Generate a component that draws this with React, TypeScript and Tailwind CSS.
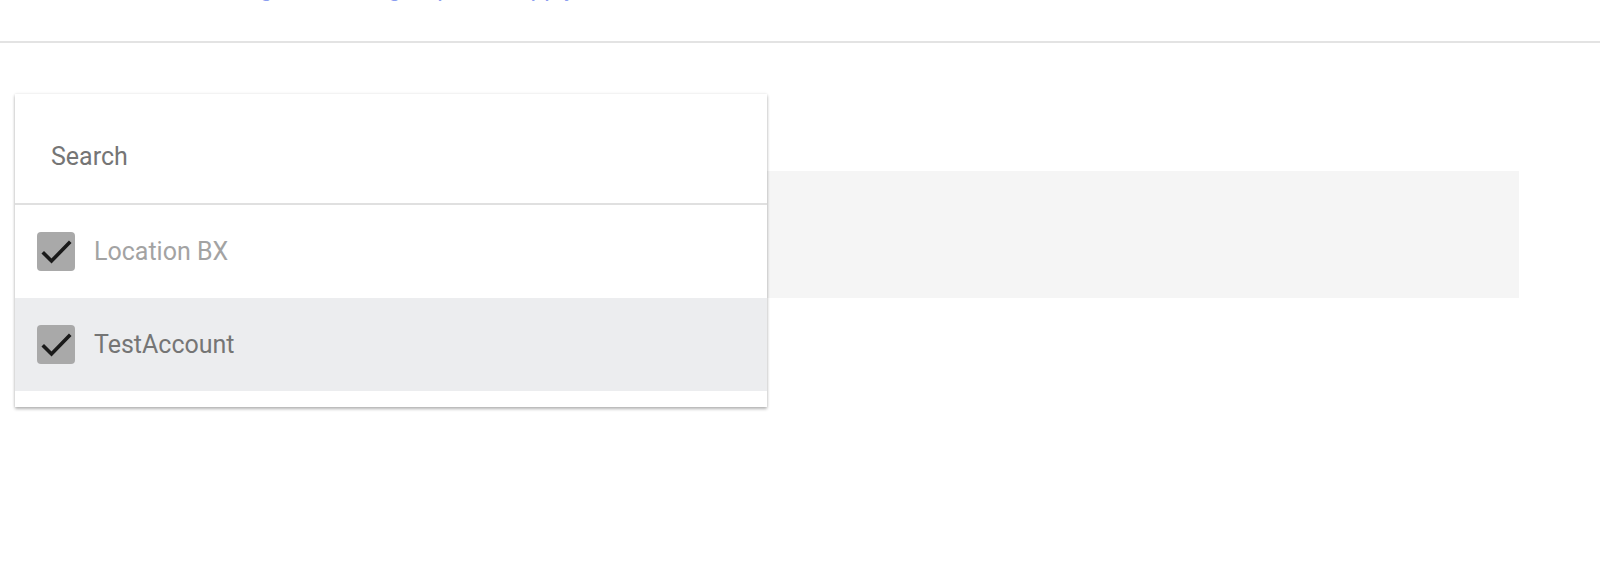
import React from 'react';

const options = [
  { label: 'Location BX', checked: true, active: false },
  { label: 'TestAccount', checked: true, active: true },
];

function CheckBox() {
  return (
    <span className="flex h-[39px] w-[38px] shrink-0 items-center justify-center rounded-[4px] bg-[#a9a9a9]">
      <svg width="38" height="39" viewBox="0 0 38 39" fill="none">
        <path d="M7 21.5 L14.5 29 L32 11" stroke="#1a1a1a" strokeWidth="3.6" strokeLinecap="square" />
      </svg>
    </span>
  );
}

export default function App() {
  return (
    <div className="relative h-[564px] w-[1600px] overflow-hidden bg-white font-['Roboto','Liberation_Sans',sans-serif]">
      {/* Header (title cut off at the top) */}
      <div className="h-[43px] overflow-hidden border-b-2 border-[#e3e3e3] pl-[212px]">
        <div className="-mt-[26px] text-[24px] leading-[28px] tracking-[0.3px] text-[#8c9ef0]">
          Assign users to groups and apply
        </div>
      </div>

      {/* Content panel */}
      <div className="ml-[15px] mt-[128px] h-[127px] w-[1504px] bg-[#f5f5f5]" />

      {/* Dropdown overlay */}
      <div className="absolute left-[15px] top-[94px] w-[752px] bg-white pb-[16px] shadow-[0_2px_3px_rgba(0,0,0,0.28),0_0_3px_rgba(0,0,0,0.1)]">
        <div className="flex h-[111px] items-center border-b-2 border-[#e0e0e0] pl-[36px] pt-[16px] text-[25px] text-[#757575]">
          Search
        </div>
        {options.map((o) => (
          <div
            key={o.label}
            className={`flex h-[93px] items-center gap-[19px] pl-[22px] text-[25px] ${
              o.active ? 'bg-[#ecedef] text-[#757575]' : 'bg-white text-[#a3a3a3]'
            }`}
          >
            {o.checked && <CheckBox />}
            <span>{o.label}</span>
          </div>
        ))}
      </div>
    </div>
  );
}
